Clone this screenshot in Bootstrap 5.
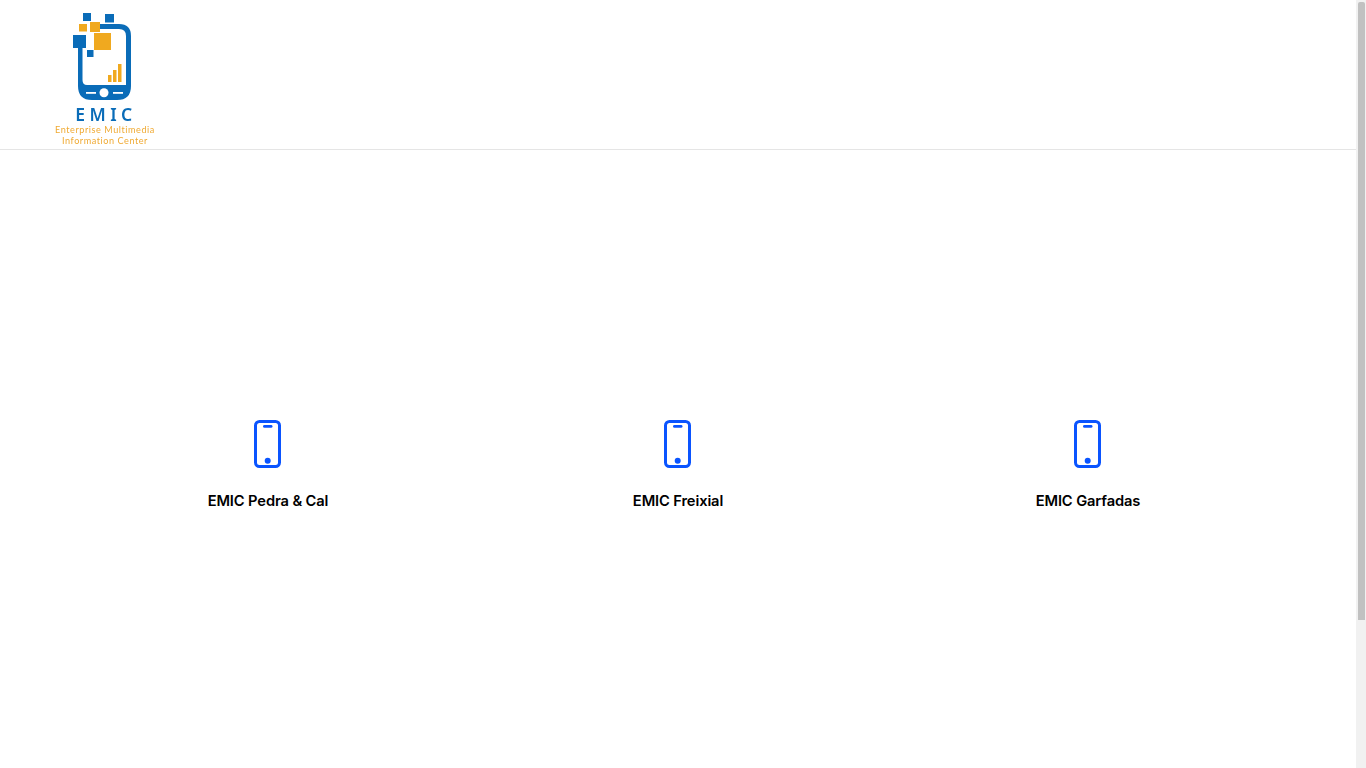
<!DOCTYPE html>
<html lang="pt">
<head>
<meta charset="utf-8">
<title>EMIC</title>
<link href="https://cdn.jsdelivr.net/npm/bootstrap@5.3.0/dist/css/bootstrap.min.css" rel="stylesheet">
<style>
html,body{height:100%;overflow:hidden}
body{background:#fff;font-family:"Inter","Noto Sans",sans-serif}
.page-col{min-width:0}
.site-head{height:150px;border-bottom:1px solid #e5e5e5;padding-left:52px}
.brand-logo{width:106px;height:140px;display:block;margin-top:9px;filter:blur(.4px)}
.app-wrap{width:1230px;padding-top:270px}
.app-icon{width:28px;height:48px;display:block}
.app-name{font-size:14.7px;font-weight:600;line-height:22px;color:#000;margin-top:22px;letter-spacing:-.12px}
.fake-track{width:10px;background:#f1f1f1;padding:2px 1.5px 0}
.fake-thumb{height:618px;background:#c1c1c1;border-radius:2px 2px 0 0}
</style>
<script src="https://cdn.jsdelivr.net/npm/bootstrap@5.3.0/dist/js/bootstrap.bundle.min.js"></script>
</head>
<body>
<div class="d-flex vh-100">
<div class="page-col flex-grow-1">
<header class="site-head d-flex align-items-start">
<svg class="brand-logo" viewBox="0 0 106 140" role="img" aria-label="EMIC">
<path fill-rule="evenodd" d="M48 15H67Q79 15 79 27V77Q79 91 65 91H40Q26 91 26 77V39H30.500V71Q30.500 76 35 76H74V27Q74 20 67 20H48Z" fill="#0a6cb8"/>
<rect x="31" y="4" width="8" height="8" fill="#0a6cb8"/>
<rect x="53" y="5" width="9" height="8.500" fill="#0a6cb8"/>
<rect x="27" y="15" width="8" height="7.500" fill="#f0a91f"/>
<rect x="38" y="13" width="10" height="10" fill="#f0a91f"/>
<rect x="21" y="26" width="13" height="13" fill="#0a6cb8"/>
<rect x="42" y="24" width="17" height="17" fill="#f0a91f"/>
<rect x="35" y="41" width="6.500" height="7" fill="#0a6cb8"/>
<rect x="56" y="66" width="3.500" height="7" fill="#f0a91f"/>
<rect x="61" y="61" width="3.500" height="12" fill="#f0a91f"/>
<rect x="66" y="55" width="3.500" height="18" fill="#f0a91f"/>
<rect x="34" y="83" width="10" height="1.800" fill="#fff"/>
<circle cx="52" cy="83.700" r="4.500" fill="#fff"/>
<rect x="61" y="83" width="10" height="1.800" fill="#fff"/>
<text x="54" y="112" text-anchor="middle" font-family="Noto Sans,sans-serif" font-weight="600" font-size="17.500" letter-spacing="4.400" fill="#0a6cb8">EMIC</text>
<text x="53" y="124" text-anchor="middle" font-family="Lato,sans-serif" font-size="9.100" letter-spacing=".55" fill="#f0aa33">Enterprise Multimedia</text>
<text x="53" y="135" text-anchor="middle" font-family="Lato,sans-serif" font-size="9.100" letter-spacing=".55" fill="#f0aa33">Information Center</text>
</svg>
</header>
<main class="app-wrap mx-auto">
<div class="row g-0 text-center">
<div class="col-4 d-flex flex-column align-items-center">
<svg class="app-icon" viewBox="0 0 28 48"><rect x="1.500" y="1.500" width="24" height="45" rx="4" fill="none" stroke="#0a54ff" stroke-width="3"/><rect x="9" y="5" width="9.500" height="2.800" rx="1.400" fill="#0a54ff"/><circle cx="13.700" cy="40.700" r="3" fill="#0a54ff"/></svg>
<div class="app-name">EMIC Pedra &amp; Cal</div>
</div>
<div class="col-4 d-flex flex-column align-items-center">
<svg class="app-icon" viewBox="0 0 28 48"><rect x="1.500" y="1.500" width="24" height="45" rx="4" fill="none" stroke="#0a54ff" stroke-width="3"/><rect x="9" y="5" width="9.500" height="2.800" rx="1.400" fill="#0a54ff"/><circle cx="13.700" cy="40.700" r="3" fill="#0a54ff"/></svg>
<div class="app-name">EMIC Freixial</div>
</div>
<div class="col-4 d-flex flex-column align-items-center">
<svg class="app-icon" viewBox="0 0 28 48"><rect x="1.500" y="1.500" width="24" height="45" rx="4" fill="none" stroke="#0a54ff" stroke-width="3"/><rect x="9" y="5" width="9.500" height="2.800" rx="1.400" fill="#0a54ff"/><circle cx="13.700" cy="40.700" r="3" fill="#0a54ff"/></svg>
<div class="app-name">EMIC Garfadas</div>
</div>
</div>
</main>
</div>
<aside class="fake-track flex-shrink-0"><div class="fake-thumb"></div></aside>
</div>
</body>
</html>
